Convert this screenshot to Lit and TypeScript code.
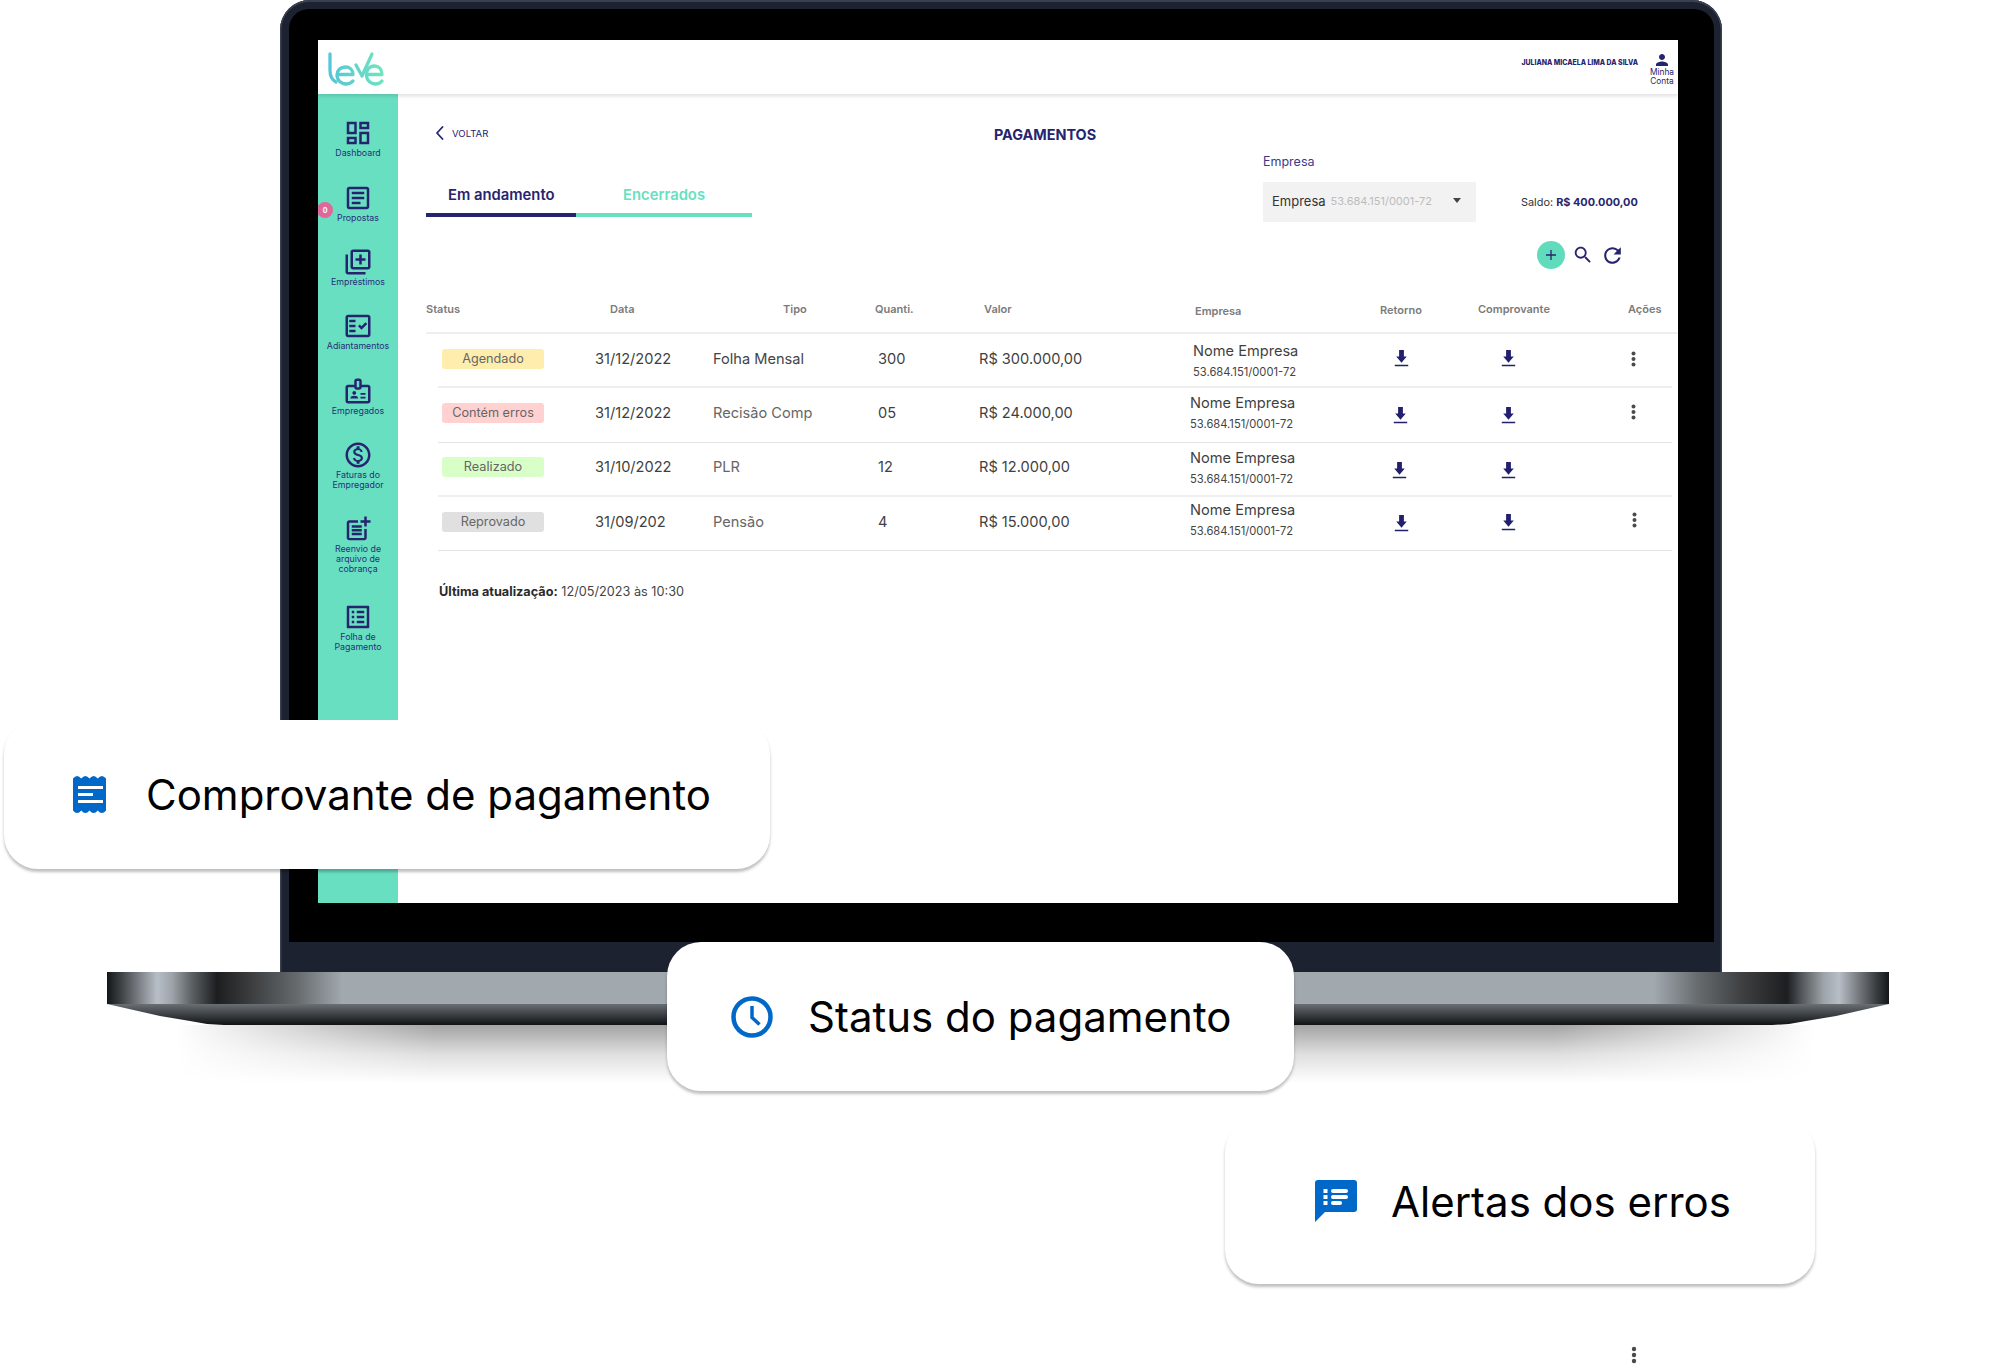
import { LitElement, html, css } from "lit";
import { customElement } from "lit/decorators.js";

const NAV = [
  { label: ["Dashboard"], mt: 24, d: "M19 5v2h-4V5h4M9 5v6H5V5h4m10 8v6h-4v-6h4M9 17v2H5v-2h4M21 3h-8v6h8V3zM11 3H3v10h8V3zm10 8h-8v10h8V11zm-10 4H3v6h8v-6z" },
  { label: ["Propostas"], mt: 25, d: "M19 5v14H5V5h14m0-2H5c-1.1 0-2 .9-2 2v14c0 1.1.9 2 2 2h14c1.1 0 2-.9 2-2V5c0-1.1-.9-2-2-2zM14 17H7v-2h7v2zm3-4H7v-2h10v2zm0-4H7V7h10v2z" },
  { label: ["Empréstimos"], mt: 24, d: "M4 6H2v14c0 1.1.9 2 2 2h14v-2H4V6zm16-4H8c-1.1 0-2 .9-2 2v12c0 1.1.9 2 2 2h12c1.1 0 2-.9 2-2V4c0-1.1-.9-2-2-2zm0 14H8V4h12v12zm-7-2h2v-3h3V9h-3V6h-2v3h-3v2h3z" },
  { label: ["Adiantamentos"], mt: 24, d: "M20 3H4c-1.1 0-2 .9-2 2v14c0 1.1.9 2 2 2h16c1.1 0 2-.9 2-2V5c0-1.1-.9-2-2-2zm0 16H4V5h16v14zM19.41 10.42l-1.42-1.42-3.17 3.17-1.41-1.42L12 12.16 14.82 15zM5 7h5v2H5zm0 4h5v2H5zm0 4h5v2H5z" },
  { label: ["Empregados"], mt: 25, d: "M20 7h-5V4c0-1.1-.9-2-2-2h-2c-1.1 0-2 .9-2 2v3H4c-1.1 0-2 .9-2 2v11c0 1.1.9 2 2 2h16c1.1 0 2-.9 2-2V9c0-1.1-.9-2-2-2zM11 4h2v5h-2V4zm9 16H4V9h5c0 1.1.9 2 2 2h2c1.1 0 2-.9 2-2h5v11zM9 15c.83 0 1.5-.67 1.5-1.5S9.83 12 9 12s-1.5.67-1.5 1.5S8.17 15 9 15zm2.08 1.18c-.64-.28-1.34-.43-2.08-.43s-1.44.15-2.08.43C6.36 16.42 6 16.96 6 17.57V18h6v-.43c0-.61-.36-1.15-.92-1.39zM18 13.5h-4V15h4zM18 16.5h-4V18h4z" },
  { label: ["Faturas do", "Empregador"], mt: 24, d: "M12 2C6.48 2 2 6.48 2 12s4.48 10 10 10 10-4.48 10-10S17.52 2 12 2zm0 18c-4.41 0-8-3.59-8-8s3.59-8 8-8 8 3.59 8 8-3.59 8-8 8zm.31-8.86c-1.77-.45-2.34-.94-2.34-1.67 0-.84.79-1.43 2.1-1.43 1.38 0 1.9.66 1.94 1.64h1.71c-.05-1.34-.87-2.57-2.49-2.97V5H10.9v1.69c-1.51.32-2.72 1.3-2.72 2.81 0 1.79 1.49 2.69 3.66 3.21 1.95.46 2.34 1.15 2.34 1.87 0 .53-.39 1.39-2.1 1.39-1.6 0-2.23-.72-2.32-1.64H8.04c.1 1.7 1.36 2.66 2.86 2.97V19h2.34v-1.67c1.52-.29 2.72-1.16 2.73-2.77-.01-2.2-1.9-2.96-3.66-3.42z" },
  { label: ["Reenvio de", "arquivo de", "cobrança"], mt: 24, d: "M17 19.22H5V7h7V5H5c-1.1 0-2 .9-2 2v12c0 1.1.9 2 2 2h12c1.1 0 2-.9 2-2v-7h-2v7.22zM19 2h-2v3h-3c.01.01 0 2 0 2h3v2.99c.01.01 2 0 2 0V7h3V5h-3V2zM7 9h8v2H7zM7 12v2h8v-2h-3zM7 15h8v2H7z" },
  { label: ["Folha de", "Pagamento"], mt: 28, d: "M19 5v14H5V5h14m1.1-2H3.9c-.5 0-.9.4-.9.9v16.2c0 .4.4.9.9.9h16.2c.4 0 .9-.5.9-.9V3.9c0-.5-.5-.9-.9-.9zM11 7h6v2h-6V7zm0 4h6v2h-6v-2zm0 4h6v2h-6zM7 7h2v2H7zm0 4h2v2H7zm0 4h2v2H7z" },
];

const HEAD = [
  { t: "Status", mt: 0 }, { t: "Data", mt: 0 }, { t: "Tipo", mt: 0 }, { t: "Quanti.", mt: 0 }, { t: "Valor", mt: 0 },
  { t: "Empresa", mt: 2 }, { t: "Retorno", mt: 1 }, { t: "Comprovante", mt: 0 }, { t: "Ações", mt: 0 },
];

const ROWS = [
  { status: "Agendado", cls: "yellow", date: "31/12/2022", tipo: "Folha Mensal", q: "300", v: "R$ 300.000,00", dark: true, ex: 3, ey: 6, rx: 30, iy: 0, cy: 0, dots: true, dx: 56, dy: 0 },
  { status: "Contém erros", cls: "red", date: "31/12/2022", tipo: "Recisão Comp", q: "05", v: "R$ 24.000,00", dark: false, ex: 0, ey: 2, rx: 29, iy: 4, cy: 4, dots: true, dx: 56, dy: -3 },
  { status: "Realizado", cls: "green", date: "31/10/2022", tipo: "PLR", q: "12", v: "R$ 12.000,00", dark: false, ex: 0, ey: 3, rx: 28, iy: 6, cy: 6, dots: false, dx: 56, dy: 0 },
  { status: "Reprovado", cls: "gray", date: "31/09/202", tipo: "Pensão", q: "4", v: "R$ 15.000,00", dark: false, ex: 0, ey: -2, rx: 30, iy: 4, cy: 2, dots: true, dx: 57, dy: -3 },
];

function scallops(): string {
  const w = 33, n = 4, s = w / n;
  let d = "M0 2.5";
  for (let i = 0; i < n; i++) d += ` Q${(i + 0.5) * s} -2.5 ${(i + 1) * s} 2.5`;
  d += ` V34.5`;
  for (let i = n; i > 0; i--) d += ` Q${(i - 0.5) * s} 39.5 ${(i - 1) * s} 34.5`;
  return d + "Z";
}

const dots = html`<svg class="dots" viewBox="0 0 5 16" width="5" height="16"><circle cx="2.5" cy="2.5" r="2"/><circle cx="2.5" cy="8" r="2"/><circle cx="2.5" cy="13.5" r="2"/></svg>`;
const dl = html`<svg class="dl" viewBox="0 0 24 24" width="23" height="23"><path d="M5 20h14v-1.6H5zM17.5 10H14.5V3h-5v7H6.500l5.500 6.500z"/></svg>`;

@customElement("app-root")
export class AppRoot extends LitElement {
  static styles = css`
    :host { display: block; width: 2000px; height: 1364px; position: relative; overflow: hidden; background: #fff; font-family: Inter, "Liberation Sans", sans-serif; color: #333; }
    * { box-sizing: border-box; }
    svg { display: block; flex: none; }

    .stage { display: flex; flex-direction: column; }
    .lid { margin-left: 280px; width: 1442px; height: 972px; padding: 9px 8px 30px 9px; background: #1c2230; border-radius: 30px 30px 0 0; box-shadow: inset 0 2px 0 #39404f, inset 1.5px 0 0 #39404f, inset -1.5px 0 0 #39404f; }
    .glass { height: 933px; padding: 31px 36px 39px 29px; background: #000; border-radius: 20px 20px 0 0; }
    .screen { height: 863px; background: #fff; display: flex; flex-direction: column; overflow: hidden; }

    .top { height: 54px; flex: none; display: flex; justify-content: space-between; position: relative; z-index: 1; box-shadow: 0 2px 4px rgba(0,0,0,.13); background: #fff; }
    .logo { margin: 5px 0 0 2px; }
    .user { display: flex; }
    .uname { font-size: 6.9px; font-weight: 800; color: #26246f; line-height: 11px; margin-top: 17px; white-space: nowrap; }
    .acct { width: 32px; margin-left: 8px; padding-top: 11px; display: flex; flex-direction: column; align-items: center; font-size: 8.3px; line-height: 9px; color: #26246f; text-align: center; }
    .acct svg { fill: #26246f; margin-bottom: -1px; }

    .body { flex: 1; display: flex; min-height: 0; }
    .side { width: 80px; flex: none; background: #69dfc1; position: relative; display: flex; flex-direction: column; align-items: center; }
    .nav { display: flex; flex-direction: column; align-items: center; color: #27307a; font-size: 8.8px; line-height: 10px; text-align: center; white-space: nowrap; }
    .nav svg { fill: #26246f; }
    .pill { position: absolute; left: -1px; top: 108px; width: 16px; height: 16px; border-radius: 50%; background: #e0679b; color: #fff; font-size: 7px; font-weight: 700; display: flex; align-items: center; justify-content: center; }

    .main { flex: 1; min-width: 0; padding-left: 28px; display: flex; flex-direction: column; }
    .bar { display: flex; }
    .left { width: 326px; flex: none; }
    .back { margin-top: 32px; height: 14px; display: flex; align-items: center; gap: 7px; padding-left: 9px; font-size: 9.6px; color: #26246f; }
    .back svg { stroke: #26246f; fill: none; }
    .tabs { margin-top: 45px; display: flex; }
    .tab { height: 32px; line-height: 20px; font-size: 14.8px; font-weight: 600; border-bottom: 4px solid; }
    .tab.on { width: 150px; padding-left: 22px; color: #26246f; border-color: #26246f; }
    .tab.off { width: 176px; padding-left: 47px; color: #69dfc1; border-color: #69dfc1; }
    h1 { margin: 32px 0 0 241px; width: 104px; flex: none; font-size: 14.4px; line-height: 18px; font-weight: 700; color: #26246f; text-align: center; white-space: nowrap; }
    .right { margin-left: 166px; display: flex; flex-direction: column; }
    .lbl { margin-top: 60px; font-size: 12.5px; line-height: 16px; color: #3c3a8c; }
    .selrow { margin-top: 12px; display: flex; align-items: center; }
    .select { width: 213px; height: 40px; padding: 0 0 3px 9px; background: #f2f2f2; display: flex; align-items: center; font-size: 13px; color: #333; }
    .select small { margin-left: 5px; font-size: 11px; color: #bcbcbc; }
    .select svg { margin-left: auto; margin-right: 15px; }
    .saldo { margin-left: 45px; font-size: 10.9px; color: #333; white-space: nowrap; }
    .saldo b { font-weight: 700; color: #26246f; }
    .tools { margin: 19px 0 0 274px; height: 28px; display: flex; align-items: center; }
    .plus { width: 28px; height: 28px; border-radius: 50%; background: #60dcbd; display: flex; align-items: center; justify-content: center; }
    .tools .s { margin-left: 7px; fill: #26246f; }
    .tools .r { margin-left: 6px; fill: #26246f; }

    .head { margin-top: 32px; padding-bottom: 15px; border-bottom: 2px solid #efefef; display: grid; grid-template-columns: 184px 173px 92px 109px 211px 185px 98px 150px 50px; font-size: 11px; line-height: 16px; font-weight: 600; color: #7b7b7b; height: 33px; white-space: nowrap; }
    .rows { margin: 0 6px 0 12px; }
    .row { height: 54.25px; padding-bottom: 3px; border-bottom: 2px solid #efefef; display: grid; grid-template-columns: 157px 118px 165px 101px 211px 170px 82px 133px 97px; align-items: center; font-size: 14.6px; color: #666; white-space: nowrap; }
    .row:nth-child(even) { border-bottom: 1px solid #e4e4e4; }
    .row.dark .tipo { color: #444; }
    .date, .q, .v { color: #3f3f3f; }
    .badge { margin-left: 4px; width: 102px; height: 20px; border-radius: 3px; font-size: 12.7px; line-height: 20px; text-align: center; color: #666; }
    .yellow { background: #ffedae; }
    .red { background: #ffd1d1; }
    .green { background: #d9ffc9; }
    .gray { background: #e0e0e0; }
    .emp { line-height: 19px; color: #3f3f3f; }
    .emp small { display: block; margin-top: 2px; font-size: 11.2px; color: #444; }
    .dl { fill: #22206e; }
    .dots { fill: #4a4a4a; }
    .upd { margin: 33px 0 0 13px; font-size: 12.7px; line-height: 16px; color: #444; }
    .upd b { font-weight: 700; color: #2b2b2b; }

    .deck { margin-left: 107px; width: 1782px; height: 32px; background: linear-gradient(to right, #14171a 0, #3e4144 14px, #b8bec6 50px, #9ea4aa 65px, #5c6064 85px, #1c1e20 110px, #3c3e40 145px, #666a6d 190px, #a1a8ae 235px, #a1a8ae calc(100% - 235px), #666a6d calc(100% - 190px), #3c3e40 calc(100% - 145px), #1c1e20 calc(100% - 102px), #5c6064 calc(100% - 85px), #9ea4aa calc(100% - 65px), #b8bec6 calc(100% - 50px), #3e4144 calc(100% - 14px), #14171a 100%); }
    .lip { margin-left: 107px; width: 1782px; height: 21px; background: linear-gradient(to bottom, #6a6f74, #101214); clip-path: polygon(0 0, 100% 0, calc(100% - 53px) 12px, calc(100% - 83px) 17px, calc(100% - 100px) 20px, calc(100% - 117px) 21px, 117px 21px, 100px 20px, 83px 17px, 53px 12px); }
    .floor { margin-left: 175px; width: 1640px; height: 58px; background: linear-gradient(to bottom, rgba(0,0,0,.36), rgba(0,0,0,.13) 50%, rgba(0,0,0,0)); -webkit-mask-image: linear-gradient(to right, transparent, #000 260px, #000 calc(100% - 260px), transparent); mask-image: linear-gradient(to right, transparent, #000 260px, #000 calc(100% - 260px), transparent); }

    .card { position: absolute; background: #fff; border-radius: 34px; box-shadow: 0 3px 3px rgba(0,0,0,.25); display: flex; align-items: center; font-size: 42px; color: #000; white-space: nowrap; }
    .c1 { left: 4px; top: 720px; width: 766px; height: 149px; padding-left: 69px; gap: 40px; }
    .c2 { left: 667px; top: 942px; width: 627px; height: 149px; padding-left: 64px; gap: 35px; }
    .c3 { left: 1225px; top: 1118px; width: 590px; height: 166px; padding-left: 90px; gap: 34px; }
    .ico { fill: #0068c8; }
    .stray { position: absolute; left: 1631px; top: 1346px; fill: #4a4a4a; }
  `;

  render() {
    return html`
      <div class="stage">
        <div class="lid"><div class="glass"><div class="screen">
          <div class="top">
            <svg class="logo" width="72" height="48" viewBox="0 0 72 48" fill="none" stroke="url(#lg)" stroke-width="3.3" stroke-linecap="round" stroke-linejoin="round">
              <defs><linearGradient id="lg" x1="8" x2="64" y1="30" y2="20" gradientUnits="userSpaceOnUse"><stop offset="0" stop-color="#56c4d8"/><stop offset="1" stop-color="#6ee6be"/></linearGradient></defs>
              <path d="M10 9V25C10 31 12 35 16 37"/>
              <path d="M17 29.500H33C33 24.500 29.500 22 25.500 22C20.500 22 17 25.500 17 30C17 35 21 39 26 39C29 39 31 38 33 36"/>
              <path d="M36 20L42 31L52 9"/>
              <path d="M46.500 29.500H62C62 24 58.500 21 54.500 21C49.500 21 46.500 25 46.500 30C46.500 35 50.500 39 55.500 39C58.500 39 60.500 38 62 36"/>
            </svg>
            <div class="user">
              <div class="uname">JULIANA MICAELA LIMA DA SILVA</div>
              <div class="acct">
                <svg width="18" height="18" viewBox="0 0 24 24"><path d="M12 12c2.210 0 4-1.790 4-4s-1.790-4-4-4-4 1.790-4 4 1.790 4 4 4zm0 2c-2.670 0-8 1.340-8 4v2h16v-2c0-2.660-5.330-4-8-4z"/></svg>
                <span>Minha<br />Conta</span>
              </div>
            </div>
          </div>
          <div class="body">
            <div class="side">
              ${NAV.map((n) => html`
                <div class="nav" style="margin-top:${n.mt}px">
                  <svg width="30" height="30" viewBox="0 0 24 24"><path d=${n.d}/></svg>
                  ${n.label.map((l) => html`<span>${l}</span>`)}
                </div>`)}
              <div class="pill">0</div>
            </div>
            <div class="main">
              <div class="bar">
                <div class="left">
                  <div class="back">
                    <svg width="10" height="14" viewBox="0 0 10 14" stroke-width="1.8" stroke-linecap="round" stroke-linejoin="round"><path d="M7.500 1L2 7l5.500 6"/></svg>
                    VOLTAR
                  </div>
                  <div class="tabs">
                    <div class="tab on">Em andamento</div>
                    <div class="tab off">Encerrados</div>
                  </div>
                </div>
                <h1>PAGAMENTOS</h1>
                <div class="right">
                  <div class="lbl">Empresa</div>
                  <div class="selrow">
                    <div class="select">
                      Empresa <small>53.684.151/0001-72</small>
                      <svg width="8" height="5" viewBox="0 0 8 5"><path d="M0 0H8L4 5z" fill="#444"/></svg>
                    </div>
                    <div class="saldo">Saldo: <b>R$ 400.000,00</b></div>
                  </div>
                  <div class="tools">
                    <div class="plus"><svg width="12" height="12" viewBox="0 0 12 12"><path d="M6 1V11M1 6H11" stroke="#26246f" stroke-width="1.300"/></svg></div>
                    <svg class="s" width="22" height="22" viewBox="0 0 24 24"><path d="M15.500 14h-.79l-.28-.27C15.410 12.590 16 11.110 16 9.500 16 5.910 13.090 3 9.500 3S3 5.910 3 9.500 5.910 16 9.500 16c1.610 0 3.090-.59 4.230-1.570l.27.28v.79l5 4.990L20.490 19l-4.990-5zm-6 0C7.010 14 5 11.990 5 9.500S7.010 5 9.500 5 14 7.010 14 9.500 11.990 14 9.500 14z"/></svg>
                    <svg class="r" width="25" height="25" viewBox="0 0 24 24"><path d="M17.650 6.350C16.200 4.900 14.210 4 12 4c-4.420 0-7.990 3.580-7.990 8s3.570 8 7.990 8c3.730 0 6.840-2.550 7.730-6h-2.080c-.82 2.330-3.040 4-5.650 4-3.310 0-6-2.690-6-6s2.690-6 6-6c1.660 0 3.140.69 4.220 1.780L13 11h7V4l-2.350 2.350z"/></svg>
                  </div>
                </div>
              </div>
              <div class="head">
                ${HEAD.map((h) => html`<div style="margin-top:${h.mt}px">${h.t}</div>`)}
              </div>
              <div class="rows">
                ${ROWS.map((r) => html`
                  <div class="row ${r.dark ? "dark" : ""}">
                    <div class="badge ${r.cls}">${r.status}</div>
                    <div class="date">${r.date}</div>
                    <div class="tipo">${r.tipo}</div>
                    <div class="q">${r.q}</div>
                    <div class="v">${r.v}</div>
                    <div class="emp" style="margin:${r.ey}px 0 0 ${r.ex}px">Nome Empresa<small>53.684.151/0001-72</small></div>
                    <div style="margin:${r.iy}px 0 0 ${r.rx}px">${dl}</div>
                    <div style="margin:${r.cy}px 0 0 55px">${dl}</div>
                    <div style="margin:${r.dy}px 0 0 ${r.dx}px">${r.dots ? dots : ""}</div>
                  </div>`)}
              </div>
              <div class="upd"><b>Última atualização:</b> 12/05/2023 às 10:30</div>
            </div>
          </div>
        </div></div></div>
        <div class="deck"></div>
        <div class="lip"></div>
        <div class="floor"></div>
      </div>

      <div class="card c1">
        <svg class="ico" width="33" height="37" viewBox="0 0 33 37">
          <path d=${scallops()}/>
          <g fill="#fff"><rect x="5" y="10" width="25" height="3"/><rect x="5" y="17" width="15" height="3"/><rect x="5" y="24" width="25" height="3"/></g>
        </svg>
        Comprovante de pagamento
      </div>
      <div class="card c2">
        <svg width="42" height="42" viewBox="0 0 42 42" fill="none" stroke="#0068c8">
          <circle cx="21" cy="21" r="18.500" stroke-width="4.500"/>
          <path d="M21 10V21.500L28.500 28.500" stroke-width="3.500"/>
        </svg>
        Status do pagamento
      </div>
      <div class="card c3">
        <svg class="ico" width="42" height="42" viewBox="0 0 42 42">
          <path d="M3 0H39a3 3 0 0 1 3 3V29a3 3 0 0 1-3 3H10L0 42V3a3 3 0 0 1 3-3z"/>
          <g fill="#fff">
            <rect x="8.500" y="9" width="4" height="4"/><rect x="8.500" y="15" width="4" height="4"/><rect x="8.500" y="21" width="4" height="4"/>
            <rect x="16" y="9" width="17" height="4" rx="2"/><rect x="16" y="15" width="17" height="4" rx="2"/><rect x="16" y="21" width="11" height="4" rx="2"/>
          </g>
        </svg>
        Alertas dos erros
      </div>
      <svg class="stray" width="6" height="18" viewBox="0 0 6 18"><circle cx="3" cy="3" r="2.200"/><circle cx="3" cy="9" r="2.200"/><circle cx="3" cy="15" r="2.200"/></svg>
    `;
  }
}
